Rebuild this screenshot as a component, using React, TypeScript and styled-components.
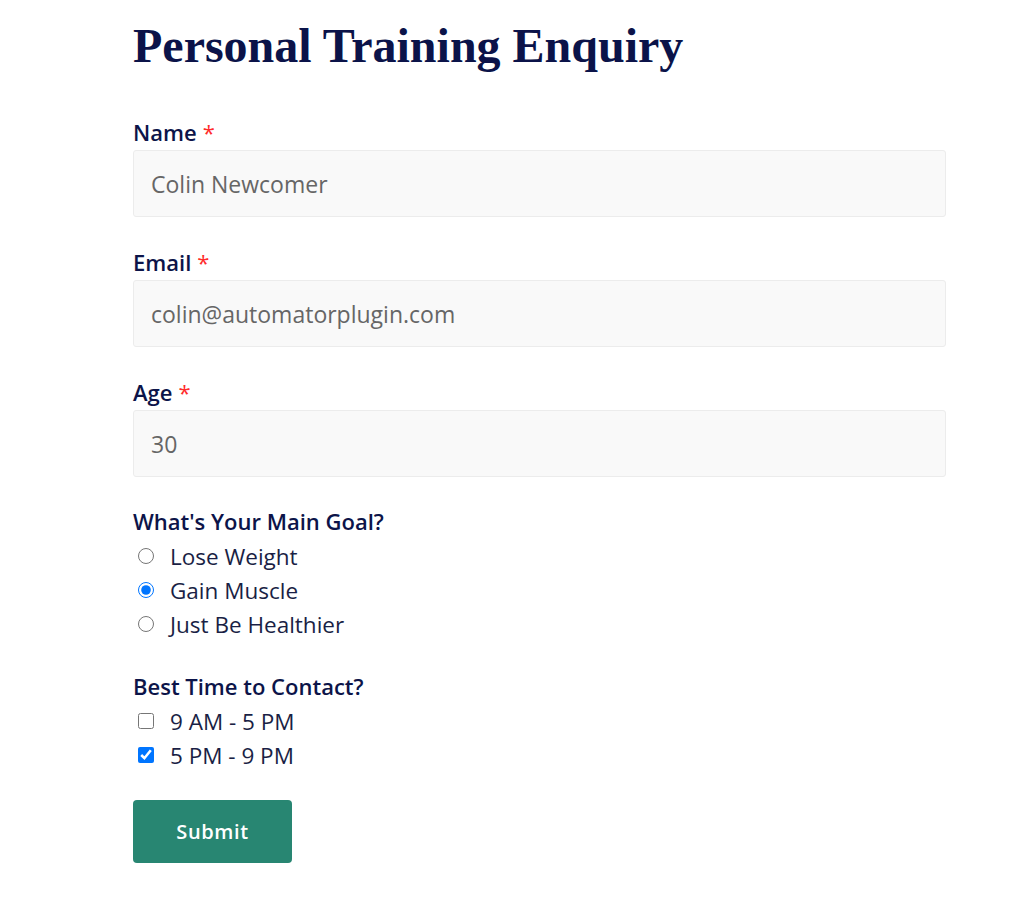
import styled, { createGlobalStyle } from 'styled-components';

const GlobalStyle = createGlobalStyle`
    body {
        margin: 0;
        background: #ffffff;
        font-family: 'Open Sans', 'Liberation Sans', sans-serif;
        color: #0c1449;
    }
`;

const Page = styled.main`
    padding: 14px 0 40px 133px;
`;

const Form = styled.form`
    width: 813px;
    display: flex;
    flex-direction: column;
`;

const Title = styled.h1`
    margin: 0 0 41px;
    font-family: 'Liberation Serif', 'DejaVu Serif', serif;
    font-weight: 700;
    font-size: 48px;
    line-height: 64px;
    color: #0b1349;
`;

const Field = styled.div<{ gap?: number }>`
    display: flex;
    flex-direction: column;
    margin-bottom: ${props => props.gap ?? 32}px;
`;

const Label = styled.label`
    font-weight: 600;
    font-size: 22px;
    line-height: 27px;
    margin-bottom: 4px;
    color: #0c1449;
`;

const Required = styled.span`
    color: #ff2b2b;
    font-weight: 400;
    margin-left: 6px;
`;

const TextInput = styled.input`
    box-sizing: border-box;
    height: 67px;
    width: 100%;
    padding: 0 17px;
    border: 1px solid #ececec;
    border-radius: 3px;
    background: #f9f9f9;
    font-family: inherit;
    font-size: 23px;
    color: #666666;
    outline: none;
`;

const OptionRow = styled.label`
    display: flex;
    align-items: center;
    height: 34px;
    font-size: 22.5px;
    color: #1a1f45;
`;

const Radio = styled.input.attrs({ type: 'radio' })`
    width: 16px;
    height: 16px;
    margin: 0 16px 0 5px;
`;

const Check = styled.input.attrs({ type: 'checkbox' })`
    width: 16px;
    height: 16px;
    margin: 0 16px 0 5px;
`;

const Submit = styled.button`
    width: 159px;
    height: 63px;
    border: none;
    border-radius: 4px;
    background: #288672;
    color: #ffffff;
    font-family: inherit;
    font-size: 20px;
    font-weight: 600;
    letter-spacing: 0.6px;
    cursor: pointer;
`;

const App: React.FC = () => {
    return (
        <>
            <GlobalStyle />
            <Page>
                <Form onSubmit={e => e.preventDefault()}>
                    <Title>Personal Training Enquiry</Title>

                    <Field>
                        <Label>Name<Required>*</Required></Label>
                        <TextInput defaultValue="Colin Newcomer" />
                    </Field>

                    <Field>
                        <Label>Email<Required>*</Required></Label>
                        <TextInput defaultValue="colin@automatorplugin.com" />
                    </Field>

                    <Field gap={31}>
                        <Label>Age<Required>*</Required></Label>
                        <TextInput defaultValue="30" />
                    </Field>

                    <Field gap={32}>
                        <Label>What's Your Main Goal?</Label>
                        <OptionRow><Radio name="goal" />Lose Weight</OptionRow>
                        <OptionRow><Radio name="goal" defaultChecked />Gain Muscle</OptionRow>
                        <OptionRow><Radio name="goal" />Just Be Healthier</OptionRow>
                    </Field>

                    <Field gap={28}>
                        <Label>Best Time to Contact?</Label>
                        <OptionRow><Check />9 AM - 5 PM</OptionRow>
                        <OptionRow><Check defaultChecked />5 PM - 9 PM</OptionRow>
                    </Field>

                    <div>
                        <Submit type="submit">Submit</Submit>
                    </div>
                </Form>
            </Page>
        </>
    );
};

export default App;
